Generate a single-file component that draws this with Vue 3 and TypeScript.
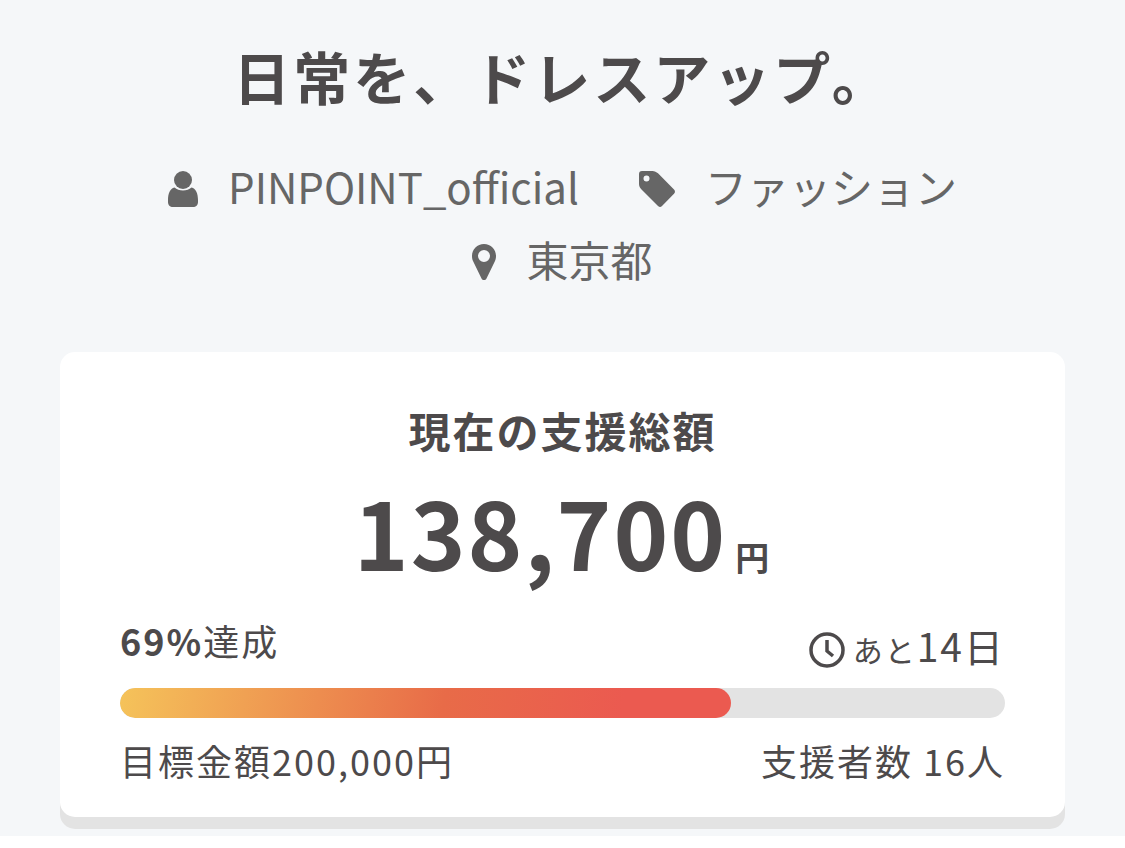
<script setup lang="ts">
import { computed } from 'vue'

interface Project {
  title: string
  owner: string
  category: string
  place: string
  raised: number
  goal: number
  daysLeft: number
  backers: number
}

const project: Project = {
  title: '日常を、ドレスアップ。',
  owner: 'PINPOINT_official',
  category: 'ファッション',
  place: '東京都',
  raised: 138700,
  goal: 200000,
  daysLeft: 14,
  backers: 16,
}

const percent = computed(() => Math.floor((project.raised / project.goal) * 100))
const format = (n: number): string => n.toLocaleString('en-US')
</script>

<template>
  <main class="page">
    <h1 class="title">{{ project.title }}</h1>

    <ul class="meta">
      <li>
        <svg class="icon" viewBox="0 0 30 36" aria-hidden="true">
          <path d="M6.500 16.600C8.800 18.600 11.500 19.400 15 19.400S21.200 18.600 23.500 16.600C28 17.500 30 23 30 29V31C30 34 28 36 25 36H5C2 36 0 34 0 31V29C0 23 2 17.500 6.500 16.600Z" />
          <circle cx="15" cy="9" r="9" />
        </svg>
        <a href="#">{{ project.owner }}</a>
      </li>
      <li>
        <svg class="icon" viewBox="0 0 36 36" aria-hidden="true">
          <path fill-rule="evenodd" d="M3 0H13.500C15.500 0 17.500 1 19 2.300L35 18.500C36.300 20 36.300 21.500 35 22.800L23 35C21.700 36.300 20.500 36.300 19 35L2.500 18.500C1 17 0 15 0 13V3C0 1 1 0 3 0ZM7.500 4.500A3 3 0 1 0 7.500 10.500A3 3 0 1 0 7.500 4.500Z" />
        </svg>
        <a href="#">{{ project.category }}</a>
      </li>
      <li>
        <svg class="icon" viewBox="0 0 24 36" aria-hidden="true">
          <path fill-rule="evenodd" d="M12 0C18.800 0 24 5.200 24 12C24 14 23.600 15.600 23 17L14.500 34.500C13.500 36.500 10.500 36.500 9.500 34.500L1 17C0.400 15.600 0 14 0 12C0 5.200 5.200 0 12 0ZM12 6A6 6 0 1 0 12 18A6 6 0 1 0 12 6Z" />
        </svg>
        <a href="#">{{ project.place }}</a>
      </li>
    </ul>

    <section class="card">
      <h2 class="label">現在の支援総額</h2>
      <p class="amount">{{ format(project.raised) }}<span class="yen">円</span></p>

      <div class="row status">
        <p><strong>{{ percent }}%</strong>達成</p>
        <p class="remaining">
          <svg class="clock" viewBox="0 0 36 36" aria-hidden="true">
            <circle cx="18" cy="18" r="16" />
            <path d="M18 8V19L24 24" />
          </svg>
          <span><small>あと</small>{{ project.daysLeft }}日</span>
        </p>
      </div>

      <div class="track" role="progressbar" aria-label="達成率" :aria-valuenow="percent" aria-valuemin="0" aria-valuemax="100">
        <div class="fill" :style="{ width: percent + '%' }"></div>
      </div>

      <div class="row totals">
        <p>目標金額{{ format(project.goal) }}円</p>
        <p>支援者数 {{ project.backers }}人</p>
      </div>
    </section>
  </main>
</template>

<style>
body {
  background: #fff;
}
</style>

<style scoped>
.page {
  padding: 33px 60px 19px;
  background: #f5f7f9;
  color: #4d4a4b;
  font-family: "Noto Sans CJK JP", sans-serif;
}

h1, h2, p, ul {
  margin: 0;
  padding: 0;
}

.title {
  font-size: 57px;
  font-weight: 700;
  line-height: 84px;
  letter-spacing: 3px;
  text-align: center;
}

.meta {
  display: flex;
  flex-wrap: wrap;
  justify-content: center;
  column-gap: 60px;
  margin: 32px 90px 57px;
  list-style: none;
  color: #666;
  font-size: 42px;
  line-height: 73px;
}

.meta li {
  display: flex;
  align-items: center;
  gap: 30px;
}

.meta a {
  color: inherit;
  text-decoration: none;
}

.icon {
  flex: none;
  height: 36px;
  margin-top: 6px;
  fill: currentColor;
}

.card {
  padding: 45px 60px 27px;
  border-radius: 15px;
  background: #fff;
  box-shadow: 0 12px 0 #e3e3e3;
}

.label {
  font-size: 42px;
  line-height: 66px;
  letter-spacing: 2px;
  text-align: center;
}

.amount {
  font-size: 93px;
  font-weight: 700;
  line-height: 136px;
  letter-spacing: 2px;
  text-align: center;
}

.yen {
  margin-left: 8px;
  font-size: 34px;
  line-height: 1;
}

.row {
  display: flex;
  justify-content: space-between;
  font-size: 36px;
  line-height: 60px;
  letter-spacing: 2px;
}

.status {
  margin-top: 11px;
  padding-bottom: 8px;
}

.remaining {
  display: flex;
  align-items: center;
  gap: 8px;
  font-size: 39px;
  line-height: 70px;
}

.remaining small {
  font-size: 30px;
  line-height: 1;
}

.clock {
  width: 36px;
  height: 36px;
  margin-top: 10px;
  fill: none;
  stroke: currentColor;
  stroke-width: 3.500;
}

.track {
  height: 30px;
  overflow: hidden;
  border-radius: 15px;
  background: #e3e3e3;
}

.fill {
  height: 100%;
  border-radius: 15px;
  background: linear-gradient(100deg, #f5c35a 0%, #e86b48 53%, #eb5a50 82%);
}

.totals {
  margin-top: 12px;
}
</style>
